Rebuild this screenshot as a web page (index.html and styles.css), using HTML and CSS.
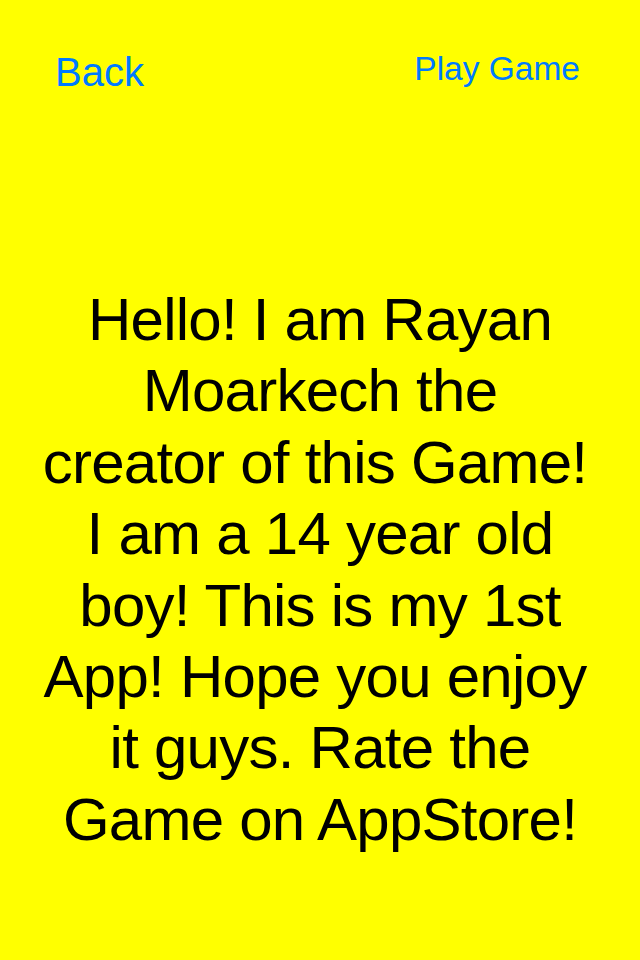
FILE: index.html
```html
<!DOCTYPE html>
<html>
<head>
<meta charset="utf-8">
<link rel="stylesheet" href="styles.css">
</head>
<body>
<div class="screen">
  <header class="topbar">
    <a class="btn btn-back">Back</a>
    <a class="btn btn-play">Play Game</a>
  </header>
  <main class="message">
    <p class="message-text">
      <span class="line">Hello! I am Rayan</span>
      <span class="line">Moarkech the</span>
      <span class="line line-wide">creator of this Game!</span>
      <span class="line">I am a 14 year old</span>
      <span class="line">boy! This is my 1st</span>
      <span class="line line-wide">App! Hope you enjoy</span>
      <span class="line">it guys. Rate the</span>
      <span class="line">Game on AppStore!</span>
    </p>
  </main>
</div>
</body>
</html>
```
FILE: styles.css
```css
html, body {
  margin: 0;
  padding: 0;
  background: #ffff00;
}
.screen {
  width: 640px;
  height: 960px;
  background: #ffff00;
  font-family: "Liberation Sans", Arial, Helvetica, sans-serif;
  overflow: hidden;
}
.topbar {
  display: flex;
  justify-content: space-between;
  align-items: flex-start;
  padding: 52px 60px 0 55px;
  height: 40px;
}
.btn {
  color: #007aff;
  line-height: 1;
  text-decoration: none;
}
.btn-back {
  font-size: 40px;
}
.btn-play {
  font-size: 33.5px;
}
.message {
  padding-top: 192px;
}
.message-text {
  margin: 0;
  text-align: center;
  font-size: 60px;
  letter-spacing: -0.75px;
  line-height: 71.4px;
  color: #000;
}
.line {
  display: block;
  white-space: nowrap;
}
.line-wide {
  padding-right: 10px;
}
```
